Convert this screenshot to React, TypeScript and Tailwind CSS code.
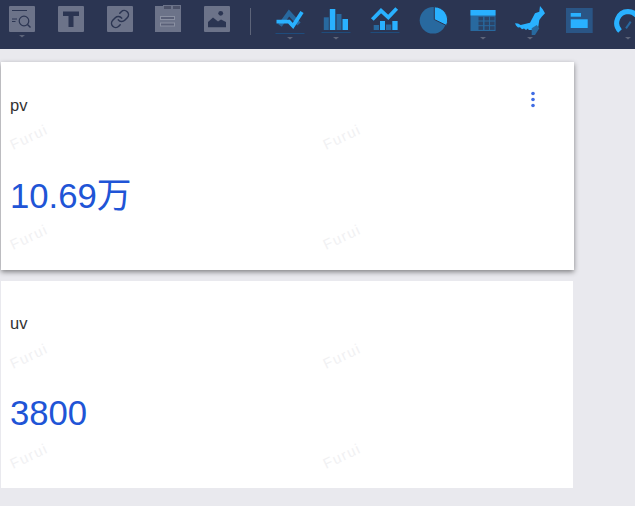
import React from "react";

const L = "#29b1ff";
const D = "#28699f";
const G = "#6c7389";
const BG = "#2b3552";
const U = "#1f4c7c";
const C = "#5d6479";

function Caret({ y = 37 }: { y?: number }) {
  return <path d={`M19 ${y}h6l-3 2.6z`} fill={C} />;
}
function Under({ y = 33.5 }: { y?: number }) {
  return <rect x="7.5" y={y - 0.5} width="29" height="1" fill={U} />;
}

const icons: React.ReactNode[] = [
  <>
    <rect x="9" y="6" width="26" height="26" rx="1" fill={G} />
    <path d="M12 10.5h15M12 19h5M12 21.5h3.5" stroke={BG} strokeWidth="1" fill="none" />
    <circle cx="24" cy="21" r="4.8" stroke={BG} strokeWidth="1.2" fill="none" />
    <path d="M27.5 24.5l3 3" stroke={BG} strokeWidth="1.4" />
    <Caret y={35} />
  </>,
  <>
    <rect x="9" y="6" width="26" height="26" rx="1" fill={G} />
    <path d="M14 11.5h16V16h-5.5v11h-5V16H14z" fill={BG} />
  </>,
  <>
    <rect x="9" y="6" width="26" height="26" rx="1" fill={G} />
    <g transform="translate(11.8 8.8) scale(0.85)" stroke={BG} strokeWidth="1.8" fill="none" strokeLinecap="round">
      <path d="M10 13a5 5 0 0 0 7.54.54l3-3a5 5 0 0 0-7.07-7.07l-1.72 1.71" />
      <path d="M14 11a5 5 0 0 0-7.54-.54l-3 3a5 5 0 0 0 7.07 7.07l1.71-1.71" />
    </g>
  </>,
  <>
    <path d="M9 6h8v4h18v22H9z" fill={G} />
    <rect x="17.5" y="5.5" width="8" height="4" fill="#4c5269" stroke={G} strokeWidth="1" />
    <rect x="26.5" y="5.5" width="8" height="4" fill="#4c5269" stroke={G} strokeWidth="1" />
    <rect x="14.5" y="16.5" width="14" height="3" fill="#5a6078" stroke="#8b91a3" strokeWidth="1" />
    <rect x="14.5" y="23" width="14" height="3" fill="#5a6078" stroke="#8b91a3" strokeWidth="1" />
  </>,
  <>
    <rect x="9" y="6" width="26" height="26" rx="1" fill={G} />
    <circle cx="25.7" cy="13.3" r="2.4" fill={BG} />
    <path d="M13 27.3V22l5-4.5 5 4 3-2 5 2.5v5.3z" fill={BG} />
  </>,
];

const charts: React.ReactNode[] = [
  <>
    <path d="M12 25.5L21 13l10 11" stroke={D} strokeWidth="4.4" fill="none" />
    <path d="M8.5 21.7H21l4 4.3 9-14" stroke={L} strokeWidth="3.8" fill="none" />
    <Under />
    <Caret />
  </>,
  <>
    <rect x="9.8" y="17.3" width="5" height="12.7" fill={D} />
    <rect x="15.8" y="9" width="5.5" height="21" fill={L} />
    <rect x="22.5" y="14" width="5" height="16" fill={D} />
    <rect x="28.5" y="19" width="5.5" height="11" fill={L} />
    <Under y={32.5} />
    <Caret />
  </>,
  <>
    <path d="M9.3 19.5L18 10.7l7.3 6.6 8.4-8.8" stroke={L} strokeWidth="3.8" fill="none" />
    <rect x="10.7" y="25" width="5.3" height="5" fill={D} />
    <rect x="17" y="21" width="5" height="9" fill={L} />
    <rect x="23" y="24.5" width="5.3" height="5.5" fill={D} />
    <rect x="29.3" y="21" width="5.3" height="9" fill={L} />
    <Under y={32.5} />
  </>,
  <>
    <circle cx="22" cy="20.3" r="13.3" fill={D} />
    <path d="M23.3 19.5V6.8A13.3 13.3 0 0 1 35.5 25.5z" fill={L} stroke={BG} strokeWidth="1" />
  </>,
  <>
    <rect x="9.5" y="10" width="25" height="21" fill={D} />
    <rect x="9.5" y="10" width="25" height="5.5" fill={L} />
    {[17.5, 23.5, 29].flatMap((x) =>
      [16.8, 21.5, 26.2].map((y) => <rect key={`${x}-${y}`} x={x} y={y} width="4.6" height="3.7" fill="#2b4468" />)
    )}
    <Caret />
  </>,
  <>
    <path
      d="M7 23.3l3 .2 2.7 1.5 9.3-2.3 5-9.4 4.3-1.6L32 6l2.7 3.3 2.3 4-3.3 3.4-2.4 3.3-1 6.7-6.6 3.3h-3l-.7-1.5-2 1.5-2-1.5-2 .7-2-2-2 .3-2-2z"
      fill={L}
    />
    <path d="M23.7 28.3l5-3.3 2.6 3.3L27 35h-3.3z" fill={D} />
    <Caret />
  </>,
  <>
    <rect x="9" y="8" width="26.7" height="25" fill="#2a5585" />
    <rect x="13.7" y="13" width="10.3" height="3.7" fill={L} />
    <rect x="13.7" y="19.3" width="17" height="8.7" fill={L} />
  </>,
  <>
    <path d="M14 31A11.5 11.5 0 0 1 22 11.5 11.5 11.5 0 0 1 33.5 23" stroke={L} strokeWidth="5" fill="none" />
    <path d="M20 28.3l4.7-6.6" stroke={D} strokeWidth="2" />
    <Caret />
  </>,
];

function Slot({ children, className = "" }: { children: React.ReactNode; className?: string }) {
  return (
    <svg width="44" height="40" viewBox="0 0 44 40" className={`shrink-0 ${className}`}>
      {children}
    </svg>
  );
}

const groupMargins = [
  "ml-[16.5px]",
  "ml-[2px]",
  "ml-[5.5px]",
  "ml-[4px]",
  "ml-[5.5px]",
  "ml-[3.5px]",
  "ml-[5px]",
  "ml-[5px]",
];

function Watermarks() {
  return (
    <div className="pointer-events-none absolute top-[65px] left-[3px] grid grid-cols-[313px_313px] grid-rows-[100px_100px]">
      {[0, 1, 2, 3].map((i) => (
        <span
          key={i}
          className="h-[20px] w-[50px] -rotate-[25deg] text-center text-[14.5px] leading-[20px] tracking-[1.4px] whitespace-nowrap text-[#f1f1f3] [font-family:'Liberation_Sans',sans-serif]"
        >
          Furui
        </span>
      ))}
    </div>
  );
}

function Card({ title, value, className = "", titleClass, numberClass, children }: { title: string; value: string; className?: string; titleClass: string; numberClass: string; children?: React.ReactNode }) {
  return (
    <section className={`relative bg-white pl-[9px] ${className}`}>
      <div className="absolute inset-0 overflow-hidden">
        <Watermarks />
      </div>
      <h2 className={`relative text-[16.5px] leading-[20px] font-normal text-[#333333] ${titleClass}`}>{title}</h2>
      <p className={`relative text-[34.7px] leading-[44px] text-[#2054d6] ${numberClass}`}>{value}</p>
      {children}
    </section>
  );
}

export default function App() {
  return (
    <div className="h-[506px] w-[635px] overflow-hidden bg-[#e9e9ee] [font-family:'Liberation_Sans','Noto_Sans_CJK_SC',sans-serif]">
      <header className="flex h-[49px] items-start overflow-hidden bg-[#2b3552]">
        <div className="flex shrink-0 gap-[4.75px]">
          {icons.map((ic, i) => (
            <Slot key={i}>{ic}</Slot>
          ))}
        </div>
        <div className="mt-[8px] ml-[11px] h-[27px] w-px shrink-0 bg-[#5d6479]" />
        {charts.map((c, i) => (
          <Slot key={i} className={groupMargins[i]}>
            {c}
          </Slot>
        ))}
      </header>
      <main className="flex flex-col gap-[11px] pt-[13px] pl-px">
        <Card title="pv" value="10.69万" className="h-[208px] w-[573px] shadow-[0_2px_5px_rgba(0,0,0,0.45)]" titleClass="pt-[33px]" numberClass="pt-[59px]">
          <svg width="6" height="20" viewBox="0 0 6 20" className="absolute top-[28px] left-[529px]" aria-label="more">
            <circle cx="3" cy="3.5" r="1.8" fill="#3f6ce4" />
            <circle cx="3" cy="9.5" r="1.8" fill="#3f6ce4" />
            <circle cx="3" cy="15.5" r="1.8" fill="#3f6ce4" />
          </svg>
        </Card>
        <Card title="uv" value="3800" className="h-[207px] w-[572px]" titleClass="pt-[32px]" numberClass="pt-[58px]" />
      </main>
    </div>
  );
}
